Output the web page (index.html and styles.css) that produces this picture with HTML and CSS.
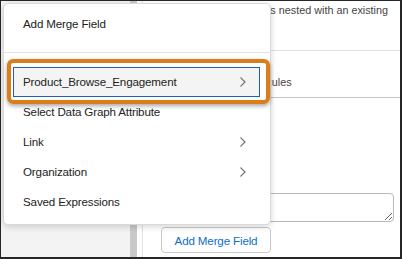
FILE: index.html
```html
<!DOCTYPE html>
<html lang="en">
<head>
<meta charset="utf-8">
<title>Add Merge Field menu</title>
<link rel="stylesheet" href="styles.css">
</head>
<body>
<div class="frame">
  <aside class="sidebar"></aside>
  <div class="scrollbar"></div>
  <div class="gutter"></div>
  <main class="main">
    <div class="desc"><p class="desc-text">Attribute that is nested with an existing</p></div>
    <div class="tabs"><span class="tab">Rules</span></div>
    <div class="editor"><textarea class="field" aria-label="Expression"></textarea></div>
    <div class="actions"><button class="btn" type="button">Add Merge Field</button></div>
  </main>

  <div class="menu" role="menu">
    <div class="menu-header">Add Merge Field</div>
    <ul class="menu-list">
      <li class="item active">Product_Browse_Engagement
        <svg class="chev" viewBox="0 0 6 10" width="6" height="10"><polyline points="0.8,0.8 5,5 0.8,9.2"/></svg>
      </li>
      <li class="item">Select Data Graph Attribute</li>
      <li class="item">Link
        <svg class="chev" viewBox="0 0 6 10" width="6" height="10"><polyline points="0.8,0.8 5,5 0.8,9.2"/></svg>
      </li>
      <li class="item">Organization
        <svg class="chev" viewBox="0 0 6 10" width="6" height="10"><polyline points="0.8,0.8 5,5 0.8,9.2"/></svg>
      </li>
      <li class="item">Saved Expressions</li>
    </ul>
  </div>

  <div class="callout"></div>
</div>
</body>
</html>
```

FILE: styles.css
```css
* { box-sizing: border-box; }

html, body {
  margin: 0;
  padding: 0;
  background: #fff;
}

body {
  font-family: "Liberation Sans", Arial, Helvetica, sans-serif;
}

.frame {
  position: relative;
  width: 402px;
  height: 259px;
  border: solid #262626;
  border-width: 1px 2px 2px 1px;
  overflow: hidden;
  display: grid;
  grid-template-columns: 129px 7px 5px 1fr;
  background: #fff;
}

.sidebar { background: #f3f3f3; }
.scrollbar { background: #c9c9c9; }
.gutter { background: #fff; }

.main {
  border-left: 1px solid #e3e3e3;
  display: flex;
  flex-direction: column;
  font-size: 10.8px;
  color: #444;
  min-width: 0;
}

.desc {
  height: 49px;
  padding: 2px 12px 0 18px;
  display: flex;
  justify-content: flex-end;
  overflow: hidden;
}

.desc-text {
  margin: 0;
  line-height: 14px;
  white-space: nowrap;
  flex: none;
}

.tabs {
  height: 48px;
  border-top: 1px solid #e0e0e0;
  border-bottom: 1px solid #c4c4c4;
  padding: 24px 0 0 121px;
  line-height: 14px;
}

.editor {
  padding: 95px 6px 5px 18px;
}

.field {
  display: block;
  width: 100%;
  height: 29px;
  margin: 0;
  border: 1px solid #b8b8b8;
  border-radius: 4px;
  resize: vertical;
  background: #fff;
}

.actions {
  padding-left: 18px;
}

.btn {
  display: block;
  width: 110px;
  height: 26px;
  border: 1px solid #c9c9c9;
  border-radius: 4px;
  background: #fff;
  color: #0b6fcc;
  font-family: inherit;
  font-size: 11.6px;
  letter-spacing: -0.15px;
  padding: 0;
}

/* Floating menu */
.menu {
  position: absolute;
  left: 2px;
  top: 2px;
  width: 268px;
  height: 222px;
  background: #fff;
  border: 1px solid #d9d9d9;
  border-radius: 5px;
  box-shadow: 0 2px 6px rgba(0, 0, 0, 0.16);
  color: #222;
  font-size: 11.6px;
  letter-spacing: -0.15px;
}

.menu-header {
  padding: 12px 0 20px 19px;
  line-height: 16px;
  border-bottom: 1px solid #e3e3e3;
}

.menu-list {
  list-style: none;
  margin: 0;
  padding: 14px 10px 7px 9px;
}

.item {
  height: 30px;
  display: flex;
  align-items: center;
  justify-content: space-between;
  padding: 0 14px 0 10px;
  line-height: 16px;
}

.item.active {
  background: #f4f4f4;
  outline: 1.5px solid #1d5fb0;
  outline-offset: -1px;
}

.chev {
  fill: none;
  stroke: #727272;
  stroke-width: 1.2;
  stroke-linecap: round;
  stroke-linejoin: round;
}

/* Orange annotation highlight */
.callout {
  position: absolute;
  left: 6px;
  top: 58px;
  width: 263px;
  height: 45px;
  border: 4px solid #dc7d1c;
  border-radius: 6px;
  box-shadow: 0 2px 4px rgba(0, 0, 0, 0.35);
}
```
